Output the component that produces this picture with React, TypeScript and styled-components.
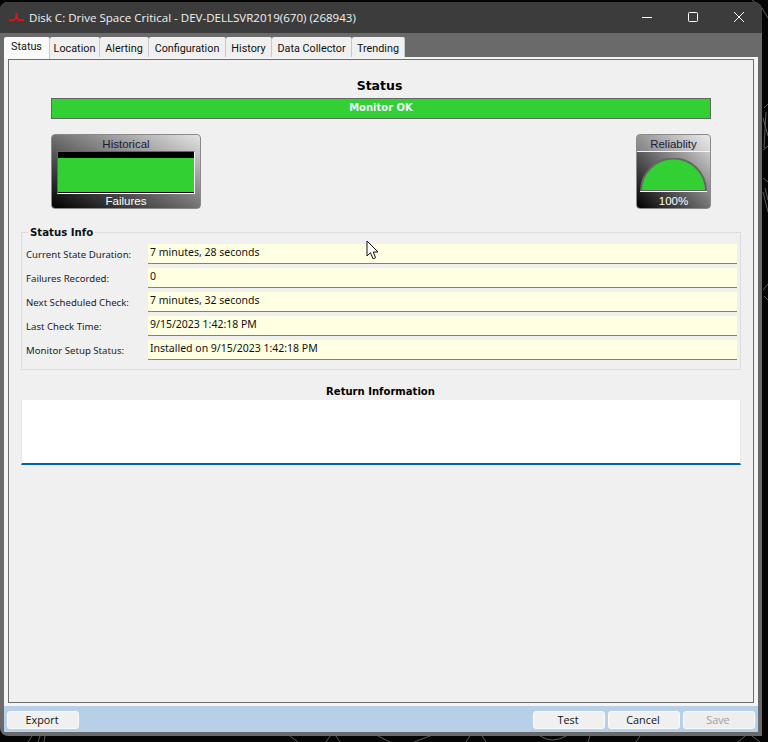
import React from 'react';
import styled, { createGlobalStyle } from 'styled-components';

const tabs = [
  { name: 'Status', width: 46 },
  { name: 'Location', width: 50 },
  { name: 'Alerting', width: 49 },
  { name: 'Configuration', width: 77 },
  { name: 'History', width: 46 },
  { name: 'Data Collector', width: 80 },
  { name: 'Trending', width: 53 },
];

const rows = [
  ['Current State Duration:', '7 minutes, 28 seconds'],
  ['Failures Recorded:', '0'],
  ['Next Scheduled Check:', '7 minutes, 32 seconds'],
  ['Last Check Time:', '9/15/2023 1:42:18 PM'],
  ['Monitor Setup Status:', 'Installed on 9/15/2023 1:42:18 PM'],
];

const App = () => {
  return (
    <Desktop>
      <GlobalStyle />
      <Wallpaper width="768" height="742" viewBox="0 0 768 742">
        <path
          d="M32 736 L28 742 M40 736 L38 742 M45 736 L44 742 M290 736 L298 742 M330 736 L326 742 M336 736 L340 742
             M378 736 L390 742 M430 736 L414 742 M470 736 L466 742 M482 736 L486 742 M540 736 Q552 744 566 736
             M590 736 L588 742 M640 736 L636 742 M745 736 L738 742 M752 736 L760 742
             M764 108 L768 104 M763 118 L768 136 M766 112 L764 148 M763 150 L768 146
             M763 178 L768 182 M763 192 L768 212 M765 188 L768 200 M763 290 L768 284 M764 296 L768 300
             M762 8 L768 18 M752 0 L760 6"
          fill="none"
          stroke="#5c5c5c"
          strokeWidth="1"
        />
      </Wallpaper>
      <Window>
        <TitleBar>
          <AppIcon width="15" height="10" viewBox="0 0 15 10">
            <path d="M0 6.5 H5 L6.5 4 V0 H8.5 V4 L10 6.5 H15 V8 H10 L7.5 6 L5 8 H0 Z" fill="#e81414" />
          </AppIcon>
          <TitleText>Disk C: Drive Space Critical - DEV-DELLSVR2019(670) (268943)</TitleText>
          <WindowControls>
            <ControlIcon width="12" height="12" viewBox="0 0 12 12">
              <path d="M1 6.5 H11" stroke="#fff" strokeWidth="1" />
            </ControlIcon>
            <ControlIcon width="12" height="12" viewBox="0 0 12 12">
              <rect x="1.5" y="1.5" width="9" height="9" rx="1" fill="none" stroke="#fff" strokeWidth="1" />
            </ControlIcon>
            <ControlIcon width="12" height="12" viewBox="0 0 12 12">
              <path d="M1 1 L11 11 M11 1 L1 11" stroke="#fff" strokeWidth="1" />
            </ControlIcon>
          </WindowControls>
        </TitleBar>

        <TabStrip>
          {tabs.map((tab, i) => (
            <Tab key={tab.name} $active={i === 0} $width={tab.width}>{tab.name}</Tab>
          ))}
        </TabStrip>

        <TabBody>
          <Panel>
            <Heading>Status</Heading>
            <StatusBar>Monitor OK</StatusBar>

            <GaugeRow>
              <HistoricalGauge>
                <GaugeTitle>Historical</GaugeTitle>
                <HistoryScreen>
                  <HistoryFill />
                </HistoryScreen>
                <GaugeCaption>Failures</GaugeCaption>
              </HistoricalGauge>
              <ReliabilityGauge>
                <ReliabilityTitle>Reliablity</ReliabilityTitle>
                <Dial width="67" height="33" viewBox="0 0 67 33">
                  <path d="M1 33 A32.5 32.5 0 0 1 66 33 Z" fill="#32d033" stroke="#666" strokeWidth="2" />
                </Dial>
                <DialBase />
                <GaugeCaption>100%</GaugeCaption>
              </ReliabilityGauge>
            </GaugeRow>

            <InfoGroup>
              <InfoLegend>Status Info</InfoLegend>
              {rows.map(([label, value]) => (
                <InfoRow key={label}>
                  <InfoLabel>{label}</InfoLabel>
                  <InfoValue>{value}</InfoValue>
                </InfoRow>
              ))}
            </InfoGroup>

            <ReturnHeading>Return Information</ReturnHeading>
            <ReturnBox />
          </Panel>
        </TabBody>

        <Footer>
          <FooterButton>Export</FooterButton>
          <FooterRight>
            <FooterButton>Test</FooterButton>
            <FooterButton>Cancel</FooterButton>
            <FooterButton disabled>Save</FooterButton>
          </FooterRight>
        </Footer>
      </Window>

      <Pointer width="14" height="21" viewBox="0 0 14 21">
        <path
          d="M1 1 V16 L4.5 12.7 L7 18.8 L9.6 17.7 L7.2 12 L12 12 Z"
          fill="#fff"
          stroke="#111"
          strokeWidth="1"
          strokeLinejoin="round"
        />
      </Pointer>
    </Desktop>
  );
};

const GlobalStyle = createGlobalStyle`
  html, body {
    margin: 0;
    padding: 0;
    background: #050505;
  }
  * {
    box-sizing: border-box;
  }
`;

const Desktop = styled.div`
  position: relative;
  width: 768px;
  height: 742px;
  overflow: hidden;
  padding-top: 2px;
  background: #050505;
`;

const Wallpaper = styled.svg`
  position: absolute;
  left: 0;
  top: 0;
`;

const Window = styled.div`
  position: relative;
  width: 762px;
  height: 734px;
  display: flex;
  flex-direction: column;
  background: #6a6a6a;
  border-radius: 8px 8px 0 8px;
  overflow: hidden;
`;

const TitleBar = styled.div`
  height: 31px;
  flex: none;
  display: flex;
  align-items: center;
  padding-left: 9px;
  background: #3c3c3c;
`;

const AppIcon = styled.svg`
  margin-right: 5px;
  margin-top: 1px;
`;

const TitleText = styled.span`
  font-family: "Open Sans", sans-serif;
  font-size: 11.55px;
  color: #f2f2f2;
  white-space: nowrap;
`;

const WindowControls = styled.div`
  margin-left: auto;
  margin-top: -1px;
  display: flex;
  gap: 34px;
  padding-right: 17px;
`;

const ControlIcon = styled.svg`
  display: block;
`;

const TabStrip = styled.div`
  height: 24px;
  flex: none;
  display: flex;
  align-items: flex-end;
  padding-left: 4px;
`;

const Tab = styled.div<{ $active?: boolean; $width: number }>`
  width: ${(p) => p.$width}px;
  height: ${(p) => (p.$active ? '22px' : '20px')};
  padding-top: ${(p) => (p.$active ? '2px' : '4px')};
  margin-bottom: ${(p) => (p.$active ? '-2px' : '0')};
  position: relative;
  font-family: Roboto, sans-serif;
  font-size: 10.8px;
  line-height: 16px;
  text-align: center;
  color: #111;
  background: ${(p) => (p.$active ? '#fafafa' : '#f0f0f0')};
  border-right: 1px solid #c8c8c8;
  border-radius: 2px 2px 0 0;
  white-space: nowrap;
`;

const TabBody = styled.div`
  flex: none;
  height: 649px;
  margin: 0 4px;
  padding: 2px 4px 3px 4px;
  background: #f4f4f4;
`;

const Panel = styled.div`
  height: 100%;
  border: 1px solid #6e6e6e;
  background: #f0f0f0;
  padding: 17px 12px 0 12px;
  display: flex;
  flex-direction: column;
`;

const Heading = styled.div`
  padding-right: 3px;
  font-family: "DejaVu Sans", sans-serif;
  font-weight: bold;
  font-size: 12.5px;
  line-height: 18px;
  text-align: center;
  color: #000;
`;

const StatusBar = styled.div`
  height: 21px;
  margin: 3px 30px 0 30px;
  border: 1px solid #5f6b5f;
  background: #32d033;
  color: #eef;
  font-family: "DejaVu Sans", sans-serif;
  font-weight: bold;
  font-size: 10px;
  line-height: 17px;
  text-align: center;
`;

const GaugeRow = styled.div`
  display: flex;
  justify-content: space-between;
  margin: 15px 30px 0 30px;
`;

const GaugeShell = styled.div`
  height: 75px;
  border: 1px solid #8a8a8a;
  border-radius: 4px;
  background: linear-gradient(to top right, #000 0%, #e4e4e4 100%);
  display: flex;
  flex-direction: column;
  font-family: "Liberation Sans", sans-serif;
  font-size: 11.5px;
  text-align: center;
  overflow: hidden;
`;

const HistoricalGauge = styled(GaugeShell)`
  width: 150px;
`;

const ReliabilityGauge = styled(GaugeShell)`
  width: 75px;
`;

const GaugeTitle = styled.div`
  height: 16px;
  flex: none;
  line-height: 18px;
  color: #1a1a3a;
`;

const GaugeCaption = styled.div`
  height: 14px;
  flex: none;
  margin-top: auto;
  line-height: 14px;
  color: #fff;
`;

const HistoryScreen = styled.div`
  height: 43px;
  flex: none;
  margin: 0 5px;
  padding-top: 6px;
  padding-bottom: 1px;
  background: #000;
  border-top: 1px solid #666;
  border-left: 1px solid #666;
  border-bottom: 1px solid #fff;
  border-right: 1px solid #fff;
`;

const HistoryFill = styled.div`
  height: 100%;
  background: #32d033;
`;

const ReliabilityTitle = styled.div`
  height: 17px;
  flex: none;
  line-height: 19px;
  color: #1a1a3a;
  border-bottom: 1px solid #f4f4f4;
  background: rgba(255, 255, 255, 0.25);
`;

const Dial = styled.svg`
  display: block;
  flex: none;
  margin: 6px auto 0;
`;

const DialBase = styled.div`
  height: 1px;
  flex: none;
  margin: 0 3px;
  background: #fff;
`;

const InfoGroup = styled.fieldset`
  margin: 17px 0 0 0;
  padding: 5px 3px 0 4px;
  height: 144px;
  border: 1px solid #dcdcdc;
  min-width: 0;
`;

const InfoLegend = styled.legend`
  margin-left: 2px;
  padding: 0 2px 0 2px;
  font-family: "DejaVu Sans", sans-serif;
  font-weight: bold;
  font-size: 10.2px;
  line-height: 13px;
  color: #111;
`;

const InfoRow = styled.div`
  display: flex;
  height: 20px;
  margin-bottom: 4px;
`;

const InfoLabel = styled.div`
  width: 122px;
  flex: none;
  padding-top: 4px;
  font-family: "Noto Sans", sans-serif;
  font-size: 9.65px;
  line-height: 14px;
  color: #222;
  white-space: nowrap;
`;

const InfoValue = styled.div`
  flex: 1;
  padding: 1px 0 0 2px;
  background: #ffffe1;
  border-bottom: 1px solid #808080;
  font-family: "Noto Sans", sans-serif;
  font-size: 10.5px;
  line-height: 15px;
  color: #111;
  white-space: nowrap;
`;

const ReturnHeading = styled.div`
  margin-top: 15px;
  padding-right: 1px;
  font-family: "DejaVu Sans", sans-serif;
  font-weight: bold;
  font-size: 10.05px;
  line-height: 13px;
  text-align: center;
  color: #000;
`;

const ReturnBox = styled.div`
  height: 65px;
  margin-top: 2px;
  background: #fff;
  border-right: 1px solid #e4e8ec;
  border-left: 1px solid #e4e8ec;
  border-bottom: 2px solid #0063b1;
`;

const Footer = styled.div`
  flex: none;
  height: 26px;
  margin: 0 4px;
  padding: 1px 3px 0 3px;
  display: flex;
  align-items: center;
  justify-content: space-between;
  background: #b8cfe8;
`;

const FooterRight = styled.div`
  display: flex;
  gap: 3px;
`;

const FooterButton = styled.button`
  width: 72px;
  height: 18px;
  padding: 0 2px 0 0;
  border: 1px solid #fafafa;
  border-radius: 3px;
  background: #f0f0f0;
  font-family: "Open Sans", sans-serif;
  font-size: 10.8px;
  line-height: 14px;
  color: #111;

  &:disabled {
    color: #a0a0a0;
    background: #eeeeee;
  }
`;

const Pointer = styled.svg`
  position: absolute;
  left: 366px;
  top: 240px;
`;

export default App;
